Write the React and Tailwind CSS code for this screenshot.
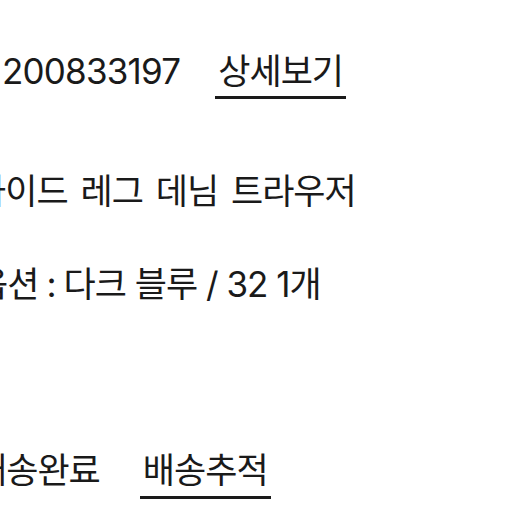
export default function App() {
  const font = { fontFamily: 'Inter, "Noto Sans CJK KR", sans-serif' };

  return (
    <div className="w-[524px] h-[524px] overflow-hidden bg-white text-[#1a1a1a]" style={font}>
      <div className="flex flex-col text-[35px] leading-[44px] tracking-[-1px] [word-spacing:4px]">
        {/* 주문번호 */}
        <div className="mt-[49px] flex items-start whitespace-nowrap">
          <span className="ml-[2px] tracking-[-0.8px]">200833197</span>
          <span className="ml-[35px] px-[3px] pb-[3px] border-b-[3px] border-[#1a1a1a]">상세보기</span>
        </div>

        {/* 상품명 */}
        <div className="mt-[70px] ml-[-26px] whitespace-nowrap">와이드 레그 데님 트라우저</div>

        {/* 옵션 */}
        <div className="mt-[49px] ml-[-24px] whitespace-nowrap [word-spacing:0px]">
          옵션<span className="mx-[8px]">:</span>다크 블루 / 32 1개
        </div>

        {/* 배송상태 */}
        <div className="mt-[142px] ml-[-25px] flex items-start whitespace-nowrap">
          <span>배송완료</span>
          <span className="ml-[40px] px-[3px] pb-[4px] border-b-[3px] border-[#1a1a1a]">배송추적</span>
        </div>
      </div>
    </div>
  );
}
